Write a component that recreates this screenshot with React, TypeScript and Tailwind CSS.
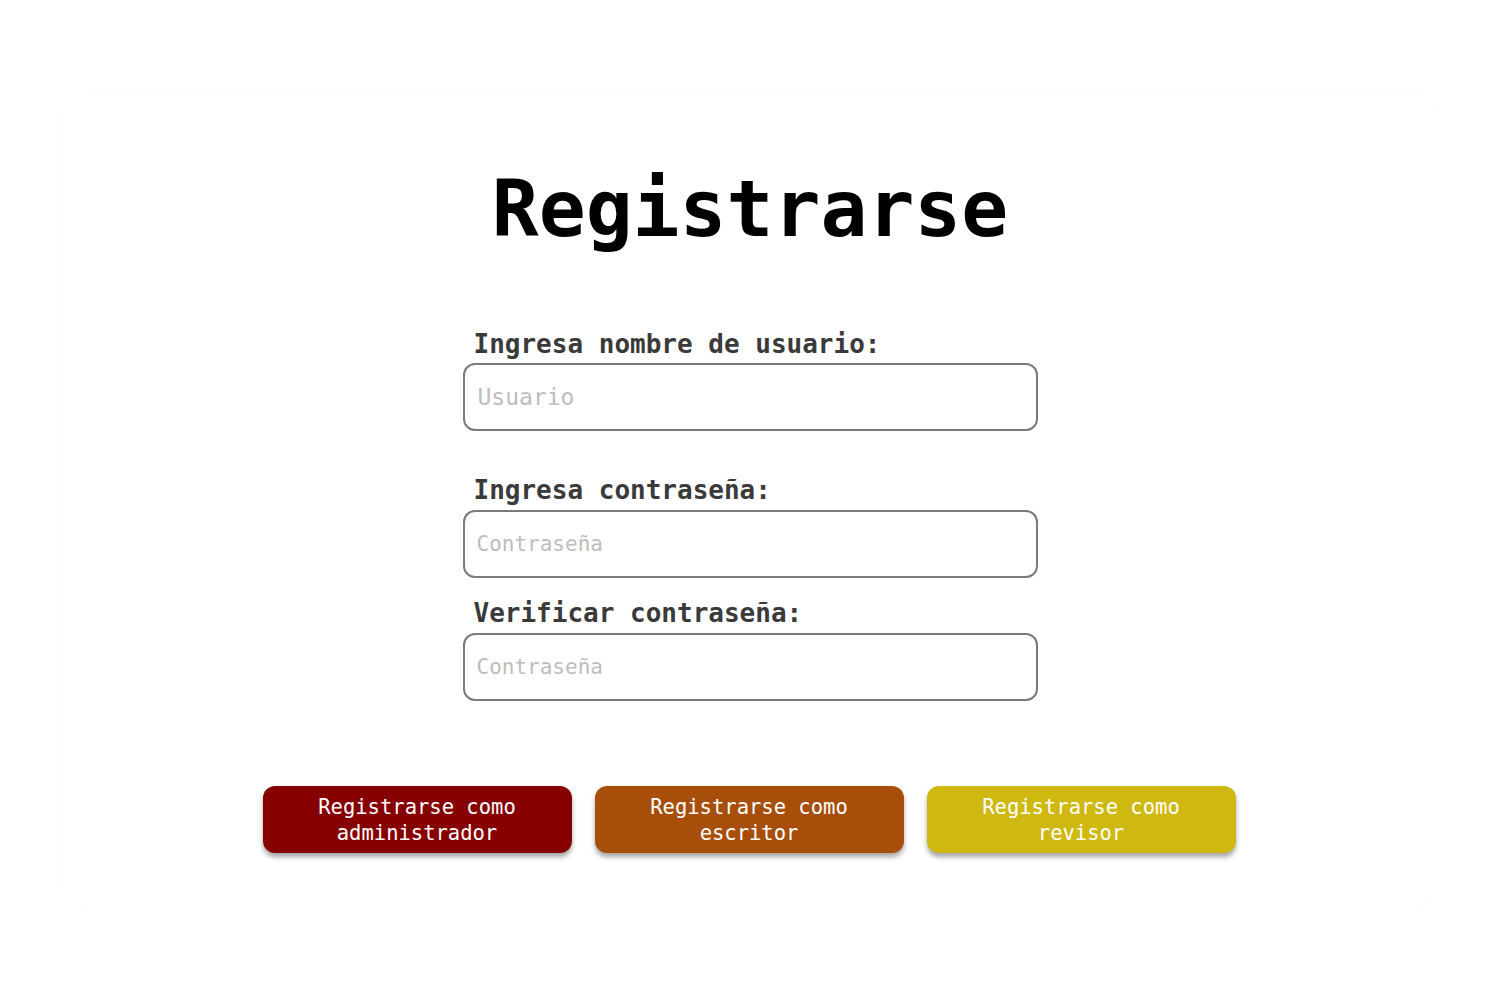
import React, { useState } from 'react';

const mono = { fontFamily: '"DejaVu Sans Mono", "Liberation Mono", monospace' };

const roles = [
  { key: 'admin', label: 'Registrarse como administrador', color: 'bg-[#870000]' },
  { key: 'writer', label: 'Registrarse como escritor', color: 'bg-[#a74f0a]' },
  { key: 'reviewer', label: 'Registrarse como revisor', color: 'bg-[#cfb80f]' },
];

const App: React.FC = () => {
  const [form, setForm] = useState({ user: '', pass: '', verify: '' });

  return (
    <div className="min-h-screen bg-white pt-[94px]" style={mono}>
      <div className="mx-[64px] w-[1372px] rounded-[24px] shadow-[0_0_10px_rgba(0,0,0,0.015)] pt-[76px] pb-[52px] flex flex-col items-center">
        <h1 className="text-[78px] leading-none font-bold text-black">Registrarse</h1>

        <form className="w-[575px] mt-[83px] flex flex-col">
          {/* Usuario */}
          <label className="pl-[11px] text-[26px] leading-none font-bold text-[#3a3a3a]">
            Ingresa nombre de usuario:
          </label>
          <input
            type="text"
            placeholder="Usuario"
            value={form.user}
            onChange={e => setForm({ ...form, user: e.target.value })}
            className="mt-[6px] h-[68px] w-full rounded-[12px] border-2 border-[#7a7a7a] px-[13px] text-[23px] text-black placeholder-[#bdbdbd] outline-none"
          />

          {/* Contraseña */}
          <label className="mt-[46px] pl-[11px] text-[26px] leading-none font-bold text-[#3a3a3a]">
            Ingresa contraseña:
          </label>
          <input
            type="password"
            placeholder="Contraseña"
            value={form.pass}
            onChange={e => setForm({ ...form, pass: e.target.value })}
            className="mt-[7px] h-[68px] w-full rounded-[12px] border-2 border-[#7a7a7a] px-[12px] text-[21px] text-black placeholder-[#bdbdbd] outline-none"
          />

          {/* Verificar */}
          <label className="mt-[22px] pl-[11px] text-[26px] leading-none font-bold text-[#3a3a3a]">
            Verificar contraseña:
          </label>
          <input
            type="password"
            placeholder="Contraseña"
            value={form.verify}
            onChange={e => setForm({ ...form, verify: e.target.value })}
            className="mt-[7px] h-[68px] w-full rounded-[12px] border-2 border-[#7a7a7a] px-[12px] text-[21px] text-black placeholder-[#bdbdbd] outline-none"
          />
        </form>

        {/* Botones */}
        <div className="mt-[85px] flex gap-[23px] -translate-x-px">
          {roles.map(r => (
            <button
              key={r.key}
              type="button"
              className={`${r.color} w-[309px] h-[67px] rounded-[12px] px-6 text-[20.5px] leading-[26px] text-white shadow-[0_4px_5px_rgba(0,0,0,0.35)]`}
            >
              {r.label}
            </button>
          ))}
        </div>
      </div>
    </div>
  );
};

export default App;
